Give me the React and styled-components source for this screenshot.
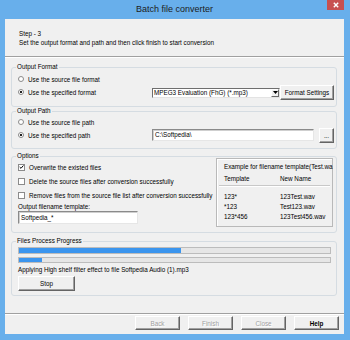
import React from "react";
import styled, { createGlobalStyle } from "styled-components";

const GlobalStyle = createGlobalStyle`
  html, body { margin: 0; padding: 0; }
  body {
    width: 350px;
    height: 340px;
    overflow: hidden;
    font-family: "Liberation Sans", Arial, sans-serif;
  }
`;

const progress = { total: 52, current: 7.3 };

const examples = [
  ["123*", "123Test.wav"],
  ["*123", "Test123.wav"],
  ["123*456", "123Test456.wav"],
];

export default function App() {
  return (
    <Window>
      <GlobalStyle />
      <TitleBar>
        <span />
        <Title>Batch file converter</Title>
        <CloseBox>
          <svg width="6" height="6" viewBox="0 0 6 6">
            <path d="M0.8 0.8 L5.2 5.2 M5.2 0.8 L0.8 5.2" stroke="#fff" strokeWidth="1.4" />
          </svg>
        </CloseBox>
      </TitleBar>

      <Client>
        <Header>
          <div>Step - 3</div>
          <div>Set the output format and path and then click finish to start conversion</div>
        </Header>

        <Body>
          <Group $pt={2} $pb={7}>
            <Legend>Output Format</Legend>
            <Row $h={12}>
              <Radio />
              <Label>Use the source file format</Label>
            </Row>
            <Row $h={14}>
              <Radio $checked />
              <Label $w={124}>Use the specified format</Label>
              <Combo>
                <ComboText>MPEG3 Evaluation (FhG) (*.mp3)</ComboText>
                <ComboArrow>
                  <svg width="5" height="3" viewBox="0 0 5 3">
                    <path d="M0 0 L5 0 L2.5 3 Z" fill="#000" />
                  </svg>
                </ComboArrow>
              </Combo>
              <Btn $w={54} $h={15}>Format Settings</Btn>
            </Row>
          </Group>

          <Group $pt={1} $pb={6}>
            <Legend>Output Path</Legend>
            <Row $h={12}>
              <Radio />
              <Label>Use the source file path</Label>
            </Row>
            <Row $h={14}>
              <Radio $checked />
              <Label $w={124}>Use the specified path</Label>
              <TextBox $w={162} $h={12}>C:\Softpedia\</TextBox>
              <Btn $w={15} $h={15} style={{ marginLeft: 5 }}>...</Btn>
            </Row>
          </Group>

          <Group $pt={0} $pb={5} $mt={3}>
            <Legend>Options</Legend>
            <OptionsGrid>
              <OptionsCol>
                <Row $h={14}>
                  <Check $checked>
                    <svg width="6" height="6" viewBox="0 0 6 6">
                      <path d="M0.8 3 L2.4 4.6 L5.3 1.2" stroke="#000" strokeWidth="1.2" fill="none" />
                    </svg>
                  </Check>
                  <Label>Overwrite the existed files</Label>
                </Row>
                <Row $h={14}>
                  <Check />
                  <Label>Delete the source files after conversion successfully</Label>
                </Row>
                <Row $h={14}>
                  <Check />
                  <Label>Remove files from the source file list after conversion successfully</Label>
                </Row>
                <FieldLabel>Output filename template:</FieldLabel>
                <TextBox $w={120} $h={13}>Softpedia_*</TextBox>
              </OptionsCol>
              <ExampleBox>
                <ExampleTitle>Example for filename template(Test.wa</ExampleTitle>
                <ExampleRow $head>
                  <span>Template</span>
                  <span>New Name</span>
                </ExampleRow>
                {examples.map(([t, n]) => (
                  <ExampleRow key={t}>
                    <span>{t}</span>
                    <span>{n}</span>
                  </ExampleRow>
                ))}
              </ExampleBox>
            </OptionsGrid>
          </Group>

          <Group $pt={2} $pb={4} $mt={4} $pl={6}>
            <Legend>Files Process Progress</Legend>
            <Bar $h={7}>
              <Fill style={{ width: `${progress.total}%` }} />
            </Bar>
            <Bar $h={6} $mt={3}>
              <Fill style={{ width: `${progress.current}%` }} />
            </Bar>
            <StatusText>Applying High shelf filter effect to file Softpedia Audio (1).mp3</StatusText>
            <Btn $w={57} $h={15}>Stop</Btn>
          </Group>
        </Body>

        <Footer>
          <Btn $w={45} $h={14} disabled>Back</Btn>
          <Btn $w={45} $h={14} disabled>Finish</Btn>
          <Btn $w={45} $h={14} disabled>Close</Btn>
          <Btn $w={45} $h={14} $bold>Help</Btn>
        </Footer>
      </Client>
    </Window>
  );
}

const Window = styled.div`
  width: 350px;
  height: 340px;
  box-sizing: border-box;
  padding: 0 6px 6px 5px;
  background: #68afeb;
  display: flex;
  flex-direction: column;
`;

const TitleBar = styled.div`
  height: 19px;
  flex: none;
  display: grid;
  grid-template-columns: 1fr auto 1fr;
`;

const Title = styled.div`
  font-size: 9px;
  line-height: 19px;
  color: #1c1c1c;
`;

const CloseBox = styled.div`
  justify-self: end;
  width: 17px;
  height: 10px;
  background: #c75050;
  display: flex;
  align-items: center;
  justify-content: center;
`;

const Client = styled.div`
  flex: 1;
  background: #f0f0f0;
  display: flex;
  flex-direction: column;
  font-size: 6.3px;
  color: #000;
`;

const Header = styled.div`
  height: 38px;
  box-sizing: border-box;
  flex: none;
  padding: 10px 0 0 14px;
  line-height: 9px;
  border-bottom: 1px solid #a0a0a0;
  box-shadow: 0 1px 0 #fff;
`;

const Body = styled.div`
  flex: 1;
  padding: 6px 7px 0 6px;
  display: flex;
  flex-direction: column;
`;

const Group = styled.fieldset`
  margin: ${(p) => p.$mt || 0}px 0 0 0;
  padding: ${(p) => p.$pt}px 4px ${(p) => p.$pb}px ${(p) => p.$pl || 6}px;
  border: 1px solid #d5dce2;
  border-radius: 3px;
  min-width: 0;
`;

const Legend = styled.legend`
  padding: 0 1px;
  margin-left: -2px;
  font-size: 6.3px;
  line-height: 8px;
`;

const Row = styled.div`
  height: ${(p) => p.$h}px;
  display: flex;
  align-items: center;
`;

const Label = styled.span`
  margin-left: 4px;
  white-space: nowrap;
  ${(p) => (p.$w ? `width: ${p.$w}px; flex: none;` : "")}
`;

const Radio = styled.span`
  box-sizing: border-box;
  width: 6px;
  height: 6px;
  flex: none;
  border-radius: 50%;
  border: 1px solid #8b8b8b;
  background: ${(p) =>
    p.$checked ? "radial-gradient(circle, #222 0 1.2px, #fff 1.5px)" : "#fff"};
`;

const Check = styled.span`
  box-sizing: border-box;
  width: 7px;
  height: 7px;
  flex: none;
  border: 1px solid #8b8b8b;
  background: #fff;
  display: flex;
  align-items: center;
  justify-content: center;
  svg { display: block; }
`;

const Combo = styled.div`
  box-sizing: border-box;
  width: 128px;
  height: 10px;
  margin-top: 1px;
  flex: none;
  display: flex;
  align-items: stretch;
  background: #fff;
  border: 1px solid;
  border-color: #6e6e6e #e3e3e3 #e3e3e3 #6e6e6e;
`;

const ComboText = styled.span`
  flex: 1;
  padding-left: 1px;
  line-height: 8px;
  white-space: nowrap;
  overflow: hidden;
`;

const ComboArrow = styled.span`
  width: 8px;
  flex: none;
  box-sizing: border-box;
  background: #f0f0f0;
  border: 1px solid;
  border-color: #fff #696969 #696969 #fff;
  display: flex;
  align-items: center;
  justify-content: center;
`;

const Btn = styled.button`
  box-sizing: border-box;
  width: ${(p) => p.$w}px;
  height: ${(p) => p.$h}px;
  flex: none;
  padding: 0;
  font-family: inherit;
  font-size: 6.3px;
  font-weight: ${(p) => (p.$bold ? 700 : 400)};
  color: ${(p) => (p.disabled ? "#a0a0a0" : "#000")};
  text-shadow: ${(p) => (p.disabled ? "1px 1px 0 #fff" : "none")};
  background: #f0f0f0;
  border: 1px solid;
  border-color: #fff #646464 #646464 #fff;
  box-shadow: inset -1px -1px 0 #a0a0a0;
`;

const TextBox = styled.div`
  box-sizing: border-box;
  width: ${(p) => p.$w}px;
  height: ${(p) => p.$h}px;
  flex: none;
  padding-left: 2px;
  line-height: ${(p) => p.$h - 2}px;
  background: #fff;
  border: 1px solid;
  border-color: #8a8a8a #e6e6e6 #e6e6e6 #8a8a8a;
  box-shadow: inset 1px 1px 0 #cfcfcf;
  white-space: nowrap;
`;

const OptionsGrid = styled.div`
  display: flex;
  align-items: flex-start;
`;

const OptionsCol = styled.div`
  flex: 1;
  min-width: 0;
  display: flex;
  flex-direction: column;
`;

const FieldLabel = styled.div`
  line-height: 9px;
`;

const ExampleBox = styled.div`
  box-sizing: border-box;
  width: 117px;
  height: 69px;
  flex: none;
  margin: -2px -1px 0 0;
  border: 1px solid #b9b9b9;
  box-shadow: inset 1px 1px 0 #fff;
`;

const ExampleTitle = styled.div`
  height: 15px;
  padding-left: 7px;
  line-height: 15px;
  white-space: nowrap;
`;

const ExampleRow = styled.div`
  display: grid;
  grid-template-columns: 56px 1fr;
  height: 10px;
  line-height: 10px;
  margin: 0 2px;
  padding-left: 5px;
  ${(p) =>
    p.$head
      ? `border-bottom: 1px solid #c8c8c8; box-shadow: 0 1px 0 #fff; margin-bottom: 6px; height: 11px;`
      : ""}
`;

const Bar = styled.div`
  box-sizing: border-box;
  height: ${(p) => p.$h}px;
  margin-top: ${(p) => p.$mt || 0}px;
  margin-right: 1px;
  border: 1px solid #bcbcbc;
  background: #e6e6e6;
`;

const Fill = styled.div`
  height: 100%;
  background: #3b95ee;
`;

const StatusText = styled.div`
  line-height: 9px;
  margin: 2px 0;
  white-space: nowrap;
`;

const Footer = styled.div`
  height: 21px;
  flex: none;
  box-sizing: border-box;
  padding: 2px 5px 0 0;
  border-top: 1px solid #a0a0a0;
  box-shadow: inset 0 1px 0 #fff;
  display: flex;
  justify-content: flex-end;
  align-items: flex-start;
  gap: 8px;
`;
